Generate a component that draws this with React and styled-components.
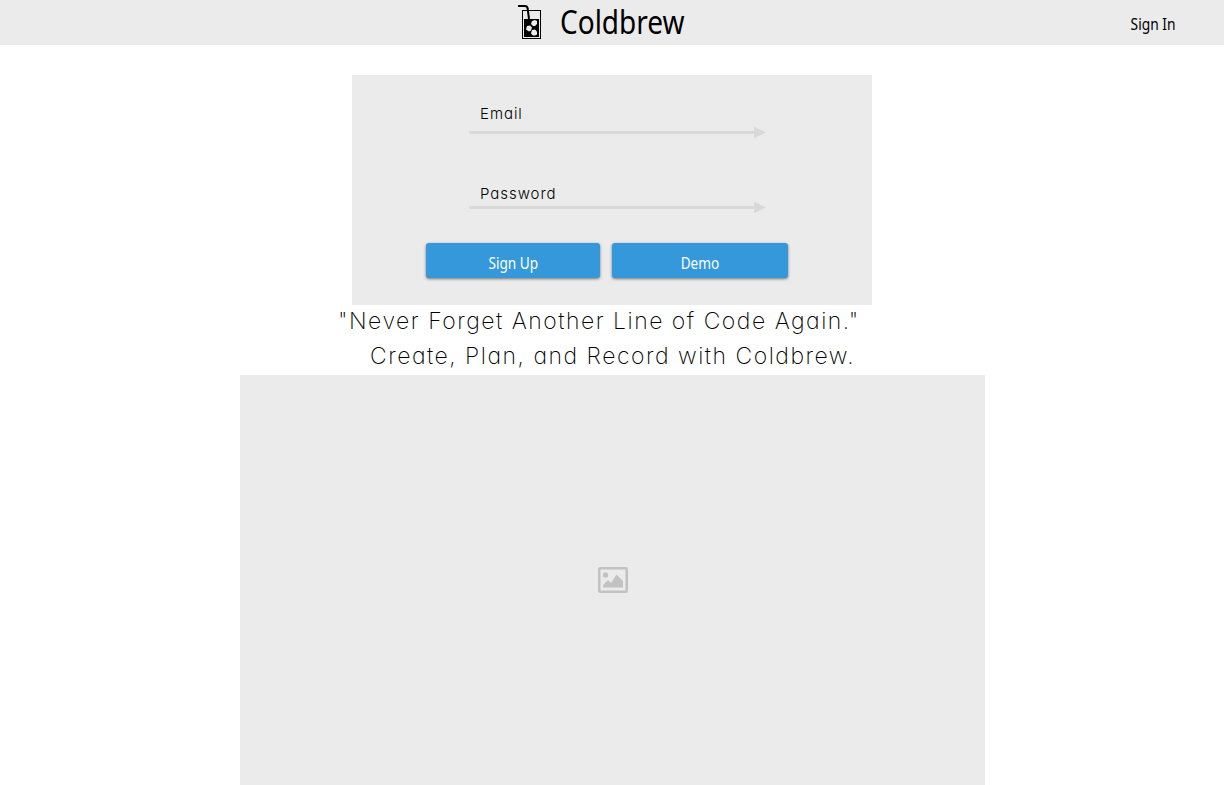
import React from "react";
import styled, { createGlobalStyle } from "styled-components";

const GlobalStyle = createGlobalStyle`
  *, *::before, *::after { box-sizing: border-box; }
  body { margin: 0; background: #fff; color: #000; overflow: hidden; }
`;

const uiFont = `"Noto Sans", "Open Sans", sans-serif`;
const roundFont = `Inter, Lato, sans-serif`;

const Page = styled.div`
  width: 1224px;
  height: 785px;
  display: flex;
  flex-direction: column;
  align-items: center;
`;

const Header = styled.header`
  flex: none;
  width: 100%;
  height: 45px;
  display: grid;
  grid-template-columns: 1fr auto 1fr;
  background: #ebebeb;
  font-family: ${uiFont};
`;

const Brand = styled.div`
  grid-column: 2;
  display: flex;
  width: 190px;
  padding-left: 1px;
`;

const Logo = styled.svg`
  flex: none;
  width: 24px;
  height: 36px;
  margin-top: 4px;
`;

const BrandName = styled.h1`
  margin: 0 0 0 18px;
  font-size: 32px;
  font-weight: 400;
  line-height: 43px;
  white-space: nowrap;
  transform: scaleX(0.875);
  transform-origin: left;
`;

const SignIn = styled.a`
  justify-self: end;
  margin-right: 49px;
  font-size: 15.5px;
  line-height: 49px;
  white-space: nowrap;
  transform: scaleX(0.89);
  transform-origin: right;
`;

const SignUpPanel = styled.form`
  flex: none;
  width: 520px;
  height: 230px;
  margin-top: 30px;
  padding: 29px 84px 27px 74px;
  display: flex;
  flex-direction: column;
  background: #ebebeb;
`;

const Field = styled.label`
  display: flex;
  flex-direction: column;
  width: 297px;
  margin: 0 0 ${(p) => p.$after}px 43px;
`;

const FieldName = styled.span`
  padding-left: 11px;
  font-family: ${roundFont};
  font-size: 15px;
  font-weight: 300;
  line-height: 20px;
  letter-spacing: 0.95px;
  font-feature-settings: "cv11";
`;

const ArrowRule = styled.svg`
  display: block;
  width: 297px;
  height: 13px;
  margin-top: ${(p) => p.$offset}px;
`;

const Actions = styled.div`
  display: flex;
  gap: 12px;
  margin-top: auto;
`;

const Button = styled.button`
  width: ${(p) => p.$width}px;
  height: 35px;
  padding: 4px 0 0;
  border: 0;
  border-radius: 3px;
  background: #3498db;
  box-shadow: 0 1px 3px rgba(0, 0, 0, 0.5);
  color: #fff;
  font-family: ${uiFont};
  font-size: 15.5px;
`;

const ButtonText = styled.span`
  display: inline-block;
  transform: scaleX(0.88);
`;

const Tagline = styled.div`
  flex: none;
  height: 70px;
  width: 520px;
  display: flex;
  flex-direction: column;
  font-family: ${roundFont};
  font-size: 23px;
  font-weight: 250;
  font-feature-settings: "cv11";
`;

const TagLine = styled.p`
  margin: 0 0 0 ${(p) => p.$indent}px;
  line-height: ${(p) => p.$leading}px;
  letter-spacing: 1.5px;
  white-space: nowrap;
`;

const ImagePlaceholder = styled.div`
  flex: none;
  width: 745px;
  height: 410px;
  margin-left: 1px;
  display: flex;
  align-items: center;
  justify-content: center;
  background: #ebebeb;
`;

function ColdbrewLogo() {
  return (
    <Logo viewBox="0 0 24 36">
      <rect x="4.5" y="6.5" width="18" height="28" fill="none" stroke="#000" />
      <path d="M6 15H21V33H6Z" fill="#000" />
      <path d="M0 2H7Q9.5 2 9.7 5L11 15" fill="none" stroke="#000" strokeWidth="2" />
      <g fill="#ebebeb">
        <path d="M14 17l3-1 2 1v3l-2 2h-2l-2-2z" />
        <path d="M9 22l3-.5 2 2-1 3-2 1-3-2z" />
        <path d="M14 26l3-.5 2 2v3l-2 1h-2l-2-2z" />
      </g>
    </Logo>
  );
}

function FieldArrow({ offset }) {
  return (
    <ArrowRule viewBox="0 0 297 13" $offset={offset}>
      <path d="M1.5 6.5H286" stroke="#d9d9d9" strokeWidth="3" strokeLinecap="round" />
      <path d="M285 .8L297 6.5L285 12.2Z" fill="#d9d9d9" />
    </ArrowRule>
  );
}

function PictureIcon() {
  return (
    <svg width="30" height="26" viewBox="0 0 30 26">
      <rect x="1.25" y="1.25" width="27.5" height="23.5" rx="1" fill="none" stroke="#c2c2c2" strokeWidth="2.5" />
      <circle cx="7.5" cy="8" r="2.7" fill="#c2c2c2" />
      <path d="M5 20.5V18L10 13L13 16L18.5 7.5L25 14V20.5Z" fill="#c2c2c2" />
    </svg>
  );
}

export default function App() {
  return (
    <Page>
      <GlobalStyle />
      <Header>
        <Brand>
          <ColdbrewLogo />
          <BrandName>Coldbrew</BrandName>
        </Brand>
        <SignIn>Sign In</SignIn>
      </Header>
      <SignUpPanel>
        <Field $after={45}>
          <FieldName>Email</FieldName>
          <FieldArrow offset={2} />
        </Field>
        <Field $after={0}>
          <FieldName>Password</FieldName>
          <FieldArrow offset={-3} />
        </Field>
        <Actions>
          <Button type="button" $width={174}><ButtonText>Sign Up</ButtonText></Button>
          <Button type="button" $width={176}><ButtonText>Demo</ButtonText></Button>
        </Actions>
      </SignUpPanel>
      <Tagline>
        <TagLine $indent={-14} $leading={33}>"Never Forget Another Line of Code Again."</TagLine>
        <TagLine $indent={18} $leading={36}>Create, Plan, and Record with Coldbrew.</TagLine>
      </Tagline>
      <ImagePlaceholder>
        <PictureIcon />
      </ImagePlaceholder>
    </Page>
  );
}
